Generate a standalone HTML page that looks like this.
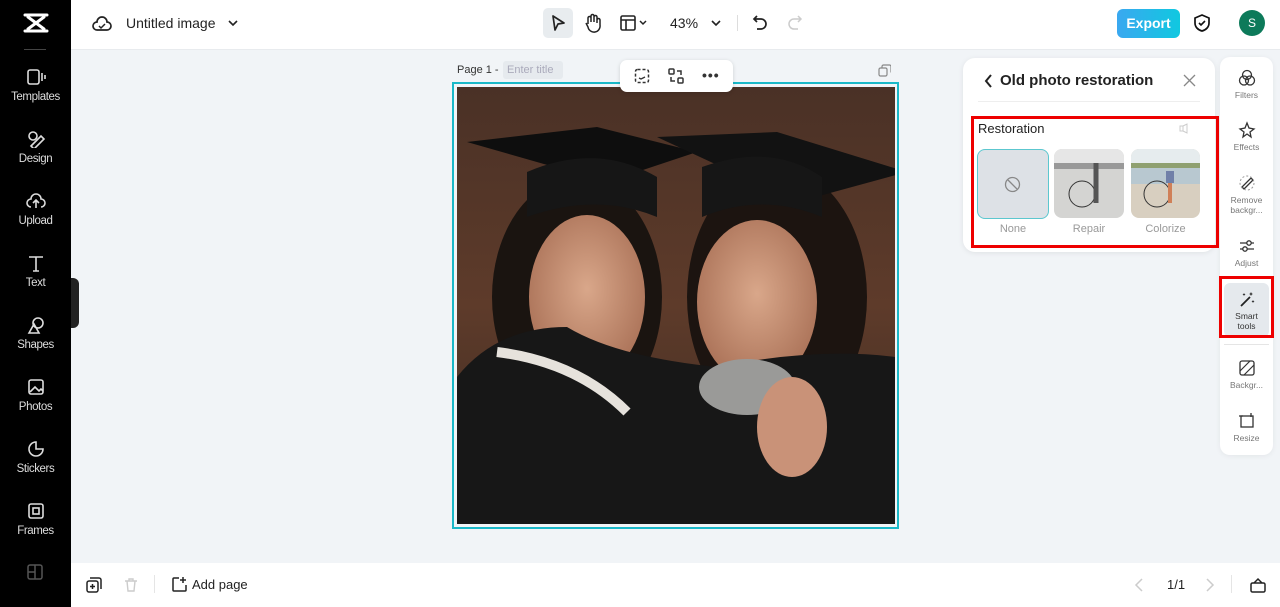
<!DOCTYPE html>
<html><head><meta charset="utf-8"><style>
*{box-sizing:border-box;margin:0;padding:0}
body{width:1280px;height:607px;overflow:hidden;background:#f1f4f7;font-family:"Liberation Sans",sans-serif;position:relative;color:#222}
.side{position:absolute;left:0;top:0;width:71px;height:607px;background:#000;color:#ddd}
.side .it{position:absolute;left:0;width:71px;text-align:center;font-size:11.5px;letter-spacing:-.4px}
.side svg{display:block;margin:0 auto 5px}
.top{position:absolute;left:71px;top:0;right:0;height:49px;background:#fff}
.bot{position:absolute;left:71px;bottom:0;right:0;height:44px;background:#fff}
.abs{position:absolute}
.panel{position:absolute;left:963px;top:58px;width:252px;height:194px;background:#fff;border-radius:12px;box-shadow:0 1px 6px rgba(0,0,0,.08)}
.rt{position:absolute;left:1220px;top:57px;width:53px;height:398px;background:#fff;border-radius:10px;box-shadow:0 1px 6px rgba(0,0,0,.06)}
.rt .it{position:absolute;left:0;width:53px;text-align:center;font-size:8.5px;color:#777;line-height:10px}
.rt svg{display:block;margin:0 auto 3px}
.red{position:absolute;border:3px solid #e00}
</style></head><body>
<div class="side">
  <svg class="abs" style="left:22px;top:12px" width="28" height="22" viewBox="0 0 28 22"><path d="M3 3h22M3 19h22M6 5l16 12M22 5L6 17" stroke="#fff" stroke-width="3" fill="none" stroke-linecap="round"/></svg>
  <div class="abs" style="left:24px;top:49px;width:22px;height:1px;background:#444"></div>
  <div class="it" style="top:68px"><svg width="20" height="18"><rect x="2" y="2" width="11" height="14" rx="2" stroke="#ddd" stroke-width="1.6" fill="none"/><path d="M16 5v8M19 7v4" stroke="#ddd" stroke-width="1.6"/></svg>Templates</div>
  <div class="it" style="top:130px"><svg width="20" height="18"><circle cx="7" cy="6" r="4" stroke="#ddd" stroke-width="1.6" fill="none"/><path d="M5 16l10-10 3 3-10 10z" stroke="#ddd" stroke-width="1.6" fill="none"/></svg>Design</div>
  <div class="it" style="top:192px"><svg width="20" height="18"><path d="M5 15a4 4 0 0 1 0-8 5 5 0 0 1 10 0 4 4 0 0 1 0 8M10 16V9M7 11l3-3 3 3" stroke="#ddd" stroke-width="1.6" fill="none"/></svg>Upload</div>
  <div class="it" style="top:254px"><svg width="20" height="18"><path d="M3 3h14M10 3v14M7 17h6" stroke="#ddd" stroke-width="1.6" fill="none"/></svg>Text</div>
  <div class="it" style="top:316px"><svg width="20" height="18"><circle cx="12" cy="7" r="5" stroke="#ddd" stroke-width="1.6" fill="none"/><path d="M3 17l5-9 5 9z" stroke="#ddd" stroke-width="1.6" fill="none"/></svg>Shapes</div>
  <div class="it" style="top:378px"><svg width="20" height="18"><rect x="3" y="2" width="14" height="14" rx="2" stroke="#ddd" stroke-width="1.6" fill="none"/><path d="M4 14l5-5 4 4 2-2 2 2" stroke="#ddd" stroke-width="1.6" fill="none"/></svg>Photos</div>
  <div class="it" style="top:440px"><svg width="20" height="18"><path d="M10 2a7 7 0 1 0 7 7h-7z" stroke="#ddd" stroke-width="1.6" fill="none"/></svg>Stickers</div>
  <div class="it" style="top:502px"><svg width="20" height="18"><rect x="3" y="2" width="14" height="14" rx="2" stroke="#ddd" stroke-width="1.6" fill="none"/><rect x="7" y="6" width="6" height="6" stroke="#ddd" stroke-width="1.6" fill="none"/></svg>Frames</div>
  <svg class="abs" style="left:27px;top:564px" width="16" height="16"><rect x="1" y="1" width="14" height="14" rx="2" stroke="#555" stroke-width="1.5" fill="none"/><path d="M8 1v14M1 8h7" stroke="#555" stroke-width="1.5"/></svg>
</div>
<div class="abs" style="left:71px;top:278px;width:8px;height:50px;background:#222;border-radius:0 6px 6px 0"></div>
<div class="top">
  <svg class="abs" style="left:20px;top:14px" width="22" height="20"><path d="M6 16a4 4 0 0 1 0-8 5 5 0 0 1 10 0 4 4 0 0 1 0 8z" stroke="#222" stroke-width="1.7" fill="none"/><path d="M8 12l2 2 4-4" stroke="#222" stroke-width="1.5" fill="none"/></svg>
  <div class="abs" style="left:55px;top:15px;font-size:14px;color:#222">Untitled image</div>
  <svg class="abs" style="left:157px;top:19px" width="10" height="8"><path d="M1 2l4 4 4-4" stroke="#222" stroke-width="1.6" fill="none"/></svg>
  <div class="abs" style="left:472px;top:8px;width:30px;height:30px;background:#e8ecef;border-radius:5px"></div>
  <svg class="abs" style="left:479px;top:14px" width="16" height="18"><path d="M3 2l11 7-6 1-3 6z" stroke="#222" stroke-width="1.7" fill="none" stroke-linejoin="round"/></svg>
  <svg class="abs" style="left:512px;top:13px" width="18" height="20"><path d="M5 11V5a1.5 1.5 0 0 1 3 0v4V3a1.5 1.5 0 0 1 3 0v6V4a1.5 1.5 0 0 1 3 0v6V7a1.5 1.5 0 0 1 3 0v5a6 6 0 0 1-12 2l-2-4" stroke="#222" stroke-width="1.5" fill="none"/></svg>
  <svg class="abs" style="left:549px;top:15px" width="28" height="16"><rect x="1" y="1" width="14" height="14" rx="1.5" stroke="#222" stroke-width="1.6" fill="none"/><path d="M1 5h14M6 5v10" stroke="#222" stroke-width="1.6"/><path d="M20 6l3 3 3-3" stroke="#222" stroke-width="1.5" fill="none"/></svg>
  <div class="abs" style="left:599px;top:15px;font-size:14px">43%</div>
  <svg class="abs" style="left:640px;top:19px" width="10" height="8"><path d="M1 2l4 4 4-4" stroke="#222" stroke-width="1.6" fill="none"/></svg>
  <div class="abs" style="left:666px;top:15px;width:1px;height:16px;background:#ddd"></div>
  <svg class="abs" style="left:681px;top:14px" width="16" height="18"><path d="M5 2L2 5l3 3M2 5h7a5 5 0 0 1 0 10H5" stroke="#222" stroke-width="1.7" fill="none"/></svg>
  <svg class="abs" style="left:716px;top:14px" width="16" height="18"><path d="M11 2l3 3-3 3M14 5H7a5 5 0 0 0 0 10h4" stroke="#ccc" stroke-width="1.5" fill="none"/></svg>
  <div class="abs" style="left:1046px;top:9px;width:63px;height:29px;border-radius:6px;background:linear-gradient(90deg,#3aa8f0,#10c8e0);color:#fff;font-weight:bold;font-size:14px;text-align:center;line-height:29px">Export</div>
  <svg class="abs" style="left:1122px;top:13px" width="18" height="20"><path d="M9 2l7 3v5c0 4-3 7-7 8-4-1-7-4-7-8V5z" stroke="#111" stroke-width="1.7" fill="none"/><path d="M6 10l2 2 4-4" stroke="#111" stroke-width="1.6" fill="none"/></svg>
  <div class="abs" style="left:1168px;top:10px;width:26px;height:26px;border-radius:50%;background:#0d7a5a;color:#fff;font-size:12px;text-align:center;line-height:26px">S</div>
</div>
<div class="abs" style="left:71px;top:49px;right:0;height:1px;background:#e8ebee"></div>
<div class="abs" style="left:457px;top:64px;font-size:11px;color:#333">Page 1 -</div>
<div class="abs" style="left:503px;top:61px;width:60px;height:18px;background:#e6eaee;border-radius:3px;font-size:11px;color:#aab;line-height:18px;padding-left:4px">Enter title</div>
<svg class="abs" style="left:878px;top:64px" width="13" height="13"><rect x="1" y="4" width="8" height="8" rx="1.5" stroke="#888" stroke-width="1.2" fill="none"/><path d="M4 4V2.5A1.5 1.5 0 0 1 5.5 1h6A1.5 1.5 0 0 1 13 2.5v6" stroke="#888" stroke-width="1.2" fill="none"/></svg>
<div class="abs" style="left:452px;top:82px;width:447px;height:447px;border:2px solid #1ab8c8"></div>
<svg class="abs" style="left:457px;top:87px" width="438" height="437" viewBox="0 0 438 437">
<defs><linearGradient id="bg" x1="0" y1="0" x2="0" y2="1"><stop offset="0" stop-color="#4a3126"/><stop offset=".5" stop-color="#5e3b2a"/><stop offset="1" stop-color="#3a2a22"/></linearGradient>
<radialGradient id="sk" cx=".5" cy=".45" r=".6"><stop offset="0" stop-color="#d9a78a"/><stop offset="1" stop-color="#a86f55"/></radialGradient></defs>
<rect width="438" height="437" fill="url(#bg)"/>
<ellipse cx="120" cy="210" rx="85" ry="120" fill="#1a1410"/>
<ellipse cx="320" cy="210" rx="90" ry="130" fill="#1c1410"/>
<ellipse cx="130" cy="210" rx="58" ry="82" fill="url(#sk)"/>
<ellipse cx="300" cy="215" rx="60" ry="82" fill="url(#sk)"/>
<path d="M10 55l130-15 100 25-90 30z" fill="#0e0e0e"/>
<path d="M200 50l120-5 130 40-110 30z" fill="#121212"/>
<path d="M70 85q70-30 130 5v40q-60-25-130 0z" fill="#161616"/>
<path d="M245 80q70-25 120 10v40q-60-25-120 0z" fill="#161616"/>
<path d="M0 437V290q40-50 110-50 50 30 150 40 100-20 178-10V437z" fill="#171717"/>
<ellipse cx="290" cy="300" rx="48" ry="28" fill="#9a9a98"/>
<ellipse cx="335" cy="340" rx="35" ry="50" fill="#c99278"/>
<path d="M40 265q80 10 130 60" stroke="#e6e2dc" stroke-width="10" fill="none"/>
</svg>
<div class="abs" style="left:620px;top:60px;width:113px;height:32px;background:#fff;border-radius:7px;box-shadow:0 1px 4px rgba(0,0,0,.15)"></div>
<svg class="abs" style="left:634px;top:68px" width="16" height="16"><rect x="1.5" y="1.5" width="13" height="13" rx="2" stroke="#333" stroke-width="1.5" stroke-dasharray="3 2" fill="none"/><path d="M5 10l2 1 4-2" stroke="#333" stroke-width="1.3" fill="none"/></svg>
<svg class="abs" style="left:668px;top:68px" width="16" height="16"><rect x="1" y="1" width="5" height="5" rx="1" stroke="#333" stroke-width="1.5" fill="none"/><rect x="10" y="10" width="5" height="5" rx="1" stroke="#333" stroke-width="1.5" fill="none"/><path d="M9 3h4v4M7 13H3V9" stroke="#333" stroke-width="1.5" fill="none"/></svg>
<div class="abs" style="left:702px;top:67px;font-size:14px;font-weight:bold;letter-spacing:1px;color:#333">•••</div>
<div class="panel">
  <svg class="abs" style="left:20px;top:15px" width="10" height="16"><path d="M8 2L3 8l5 6" stroke="#222" stroke-width="2" fill="none"/></svg>
  <div class="abs" style="left:37px;top:14px;font-size:15px;font-weight:bold;color:#222">Old photo restoration</div>
  <svg class="abs" style="left:220px;top:16px" width="13" height="13"><path d="M1 1l11 11M12 1L1 12" stroke="#888" stroke-width="1.3"/></svg>
  <div class="abs" style="left:15px;top:43px;width:222px;height:1px;background:#eee"></div>
  <div class="abs" style="left:15px;top:63px;font-size:13px;color:#222">Restoration</div>
  <svg class="abs" style="left:216px;top:65px" width="13" height="11"><path d="M1 3h3v5H1zM4 3l4-2v9L4 8" stroke="#ccc" stroke-width="1" fill="none"/></svg>
  <div class="abs" style="left:14px;top:91px;width:72px;height:70px;border:1.5px solid #5cc7cf;border-radius:8px;background:#dde1e6"></div>
  <svg class="abs" style="left:41px;top:118px" width="17" height="17"><circle cx="8.5" cy="8.5" r="7" stroke="#888" stroke-width="1.3" fill="none"/><path d="M4 4l9 9" stroke="#888" stroke-width="1.3"/></svg>
  <svg class="abs" style="left:91px;top:91px;border-radius:8px" width="70" height="69"><rect width="70" height="69" fill="#d4d4d2"/><rect width="70" height="14" fill="#e6e6e6"/><rect y="14" width="70" height="6" fill="#999"/><circle cx="28" cy="45" r="13" stroke="#333" fill="none"/><path d="M42 14v40" stroke="#555" stroke-width="5"/></svg>
  <svg class="abs" style="left:168px;top:91px;border-radius:8px" width="69" height="69"><rect width="69" height="69" fill="#d8cfc0"/><rect width="69" height="14" fill="#e6ecee"/><rect y="14" width="69" height="5" fill="#8fa070"/><rect y="19" width="69" height="16" fill="#b8c8d0"/><circle cx="26" cy="45" r="13" stroke="#333" fill="none"/><path d="M39 22v12" stroke="#7080a8" stroke-width="8"/><path d="M39 34v20" stroke="#d08058" stroke-width="4"/></svg>
  <div class="abs" style="left:14px;top:165px;width:72px;text-align:center;font-size:11px;color:#999">None</div>
  <div class="abs" style="left:91px;top:165px;width:70px;text-align:center;font-size:11px;color:#999">Repair</div>
  <div class="abs" style="left:168px;top:165px;width:69px;text-align:center;font-size:11px;color:#999">Colorize</div>
</div>
<div class="red" style="left:971px;top:116px;width:248px;height:132px"></div>
<div class="rt">
  <div class="it" style="top:12px"><svg width="18" height="18"><circle cx="9" cy="6" r="4.5" stroke="#333" stroke-width="1.3" fill="none"/><circle cx="6" cy="11.5" r="4.5" stroke="#333" stroke-width="1.3" fill="none"/><circle cx="12" cy="11.5" r="4.5" stroke="#333" stroke-width="1.3" fill="none"/></svg>Filters</div>
  <div class="it" style="top:64px"><svg width="18" height="18"><path d="M9 2l2 5 5 1-4 3 1 5-4-3-4 3 1-5-4-3 5-1z" stroke="#333" stroke-width="1.3" fill="none"/></svg>Effects</div>
  <div class="it" style="top:117px"><svg width="18" height="18"><path d="M6 15l9-9-2-2-9 9z" stroke="#333" stroke-width="1.3" fill="none"/><circle cx="9" cy="9" r="7" stroke="#999" stroke-dasharray="2 2" fill="none"/></svg>Remove<br>backgr...</div>
  <div class="it" style="top:180px"><svg width="18" height="18"><path d="M2 6h14M2 12h14" stroke="#333" stroke-width="1.3"/><circle cx="11" cy="6" r="2.2" fill="#fff" stroke="#333" stroke-width="1.3"/><circle cx="7" cy="12" r="2.2" fill="#fff" stroke="#333" stroke-width="1.3"/></svg>Adjust</div>
  <div class="abs" style="left:4px;top:226px;width:45px;height:54px;background:#e5e9ed;border-radius:6px"></div>
  <div class="it" style="top:233px;color:#333"><svg width="18" height="18"><path d="M3 16l9-9" stroke="#222" stroke-width="1.8"/><path d="M13 2l.7 1.5L15 4l-1.3.5L13 6l-.7-1.5L11 4l1.3-.5zM6 3l.5 1 1 .5-1 .5L6 6l-.5-1-1-.5 1-.5zM15 10l.5 1 1 .5-1 .5-.5 1-.5-1-1-.5 1-.5z" fill="#222"/></svg>Smart<br>tools</div>
  <div class="abs" style="left:4px;top:287px;width:45px;height:1px;background:#e5e5e5"></div>
  <div class="it" style="top:302px"><svg width="18" height="18"><rect x="2" y="2" width="14" height="14" rx="2" stroke="#333" stroke-width="1.3" fill="none"/><path d="M2 12L12 2M6 16L16 6" stroke="#333" stroke-width="1.2"/></svg>Backgr...</div>
  <div class="it" style="top:355px"><svg width="18" height="18"><rect x="3" y="4" width="12" height="11" stroke="#333" stroke-width="1.3" fill="none"/><path d="M1 4h4M13 1v4" stroke="#333" stroke-width="1.3"/></svg>Resize</div>
</div>
<div class="red" style="left:1219px;top:276px;width:55px;height:62px"></div>
<div class="bot">
  <svg class="abs" style="left:15px;top:14px" width="16" height="16"><rect x="1" y="4" width="11" height="11" rx="2" stroke="#222" stroke-width="1.5" fill="none"/><path d="M4 1h9a2 2 0 0 1 2 2v9M6.5 7v5M4 9.5h5" stroke="#222" stroke-width="1.5" fill="none"/></svg>
  <svg class="abs" style="left:52px;top:14px" width="16" height="16"><path d="M2 4h12M6 4V2h4v2M4 4l1 10h6l1-10" stroke="#ccc" stroke-width="1.4" fill="none"/></svg>
  <div class="abs" style="left:83px;top:12px;width:1px;height:18px;background:#e5e5e5"></div>
  <svg class="abs" style="left:100px;top:13px" width="17" height="17"><path d="M8 2H3a1 1 0 0 0-1 1v11a1 1 0 0 0 1 1h11a1 1 0 0 0 1-1V9M12 1v6M9 4h6" stroke="#222" stroke-width="1.5" fill="none"/></svg>
  <div class="abs" style="left:121px;top:14px;font-size:13px;color:#222">Add page</div>
  <svg class="abs" style="left:1063px;top:15px" width="10" height="14"><path d="M8 1L2 7l6 6" stroke="#ccc" stroke-width="1.5" fill="none"/></svg>
  <div class="abs" style="left:1096px;top:14px;font-size:13px;color:#222">1/1</div>
  <svg class="abs" style="left:1134px;top:15px" width="10" height="14"><path d="M2 1l6 6-6 6" stroke="#ccc" stroke-width="1.5" fill="none"/></svg>
  <div class="abs" style="left:1160px;top:12px;width:1px;height:18px;background:#e5e5e5"></div>
  <svg class="abs" style="left:1179px;top:14px" width="16" height="16"><rect x="1" y="6" width="14" height="9" rx="1.5" stroke="#222" stroke-width="1.5" fill="none"/><path d="M4 6l4-4 4 4" stroke="#222" stroke-width="1.5" fill="none"/></svg>
</div>
</body></html>
